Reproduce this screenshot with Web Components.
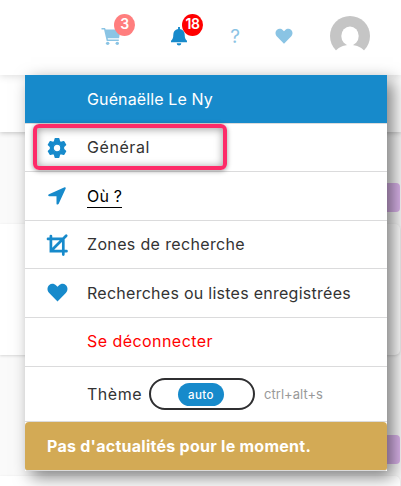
<!DOCTYPE html>
<html lang="fr">
<head>
<meta charset="utf-8">
<title>Menu utilisateur</title>
<style>
  html, body {
    margin: 0;
    height: 486px;
    overflow: hidden;
    background: #fafafa;
    font-family: Inter, "Noto Sans", sans-serif;
    color: #333;
  }
</style>
</head>
<body>
<user-page>
  <top-bar slot="top"></top-bar>
  <user-menu slot="menu">
    <menu-row kind="head" height="49"><fit-text width="126">Guénaëlle Le Ny</fit-text></menu-row>
    <menu-row icon="gear" height="48" marked><fit-text width="63">Général</fit-text></menu-row>
    <menu-row icon="arrow" kind="link" height="49"><fit-text width="35">Où ?</fit-text></menu-row>
    <menu-row icon="crop" height="48"><fit-text width="158">Zones de recherche</fit-text></menu-row>
    <menu-row icon="heart" height="49"><fit-text width="264">Recherches ou listes enregistrées</fit-text></menu-row>
    <menu-row kind="danger" height="49"><fit-text width="126">Se déconnecter</fit-text></menu-row>
    <menu-row kind="theme" height="55"><theme-switch></theme-switch></menu-row>
    <menu-row kind="news" height="49"><fit-text width="264">Pas d'actualités pour le moment.</fit-text></menu-row>
  </user-menu>
</user-page>

<script>
const ICONS = {
  gear: '<path stroke="currentColor" stroke-width="1.400" stroke-linejoin="round" fill-rule="evenodd" d="M8.200.8h3.600l.6 2.700 1.700 1 2.600-.9 1.900 3.200-2.100 1.900v2.600l2.100 1.900-1.900 3.200-2.600-.9-1.700 1-.6 2.700H8.200l-.6-2.700-1.700-1-2.600.9-1.900-3.200 2.100-1.900V8.700L1.400 6.800l1.900-3.200 2.600.9 1.700-1zM10 6.100a3.900 3.900 0 1 0 0 7.800 3.900 3.900 0 0 0 0-7.800z"/>',
  arrow: '<path d="M17.600 1.300 2 8.200c-1.300.6-.9 2.100.3 2.100h7.200v7.100c0 1.300 1.600 1.700 2.200.4L18.700 2.600c.3-.8-.4-1.500-1.100-1.300z"/>',
  crop: '<path fill="none" stroke="currentColor" stroke-width="2.700" stroke-linecap="round" d="M1 3.900h15.300v15.700M3.900 1v15.200H19.500M4.700 15.300 19.200 .8"/>',
  heart: '<path d="M10 18.500 1.700 10C-.6 7.600-.5 4 1.800 2c2-1.800 5-1.400 6.900.5L10 3.800l1.300-1.300c1.900-1.900 4.900-2.300 6.900-.5 2.300 2 2.400 5.600.1 8z"/>',
  cart: '<path fill-rule="evenodd" d="M0 1h3.700l.7 1.700H20l-1.500 9.200H6.500l.3 1.200h11.400v1.700H5.500L2.700 2.500H0z"/><circle cx="6.500" cy="17.200" r="1.800"/><circle cx="16.600" cy="17.200" r="1.800"/>',
  bell: '<path d="M9 0h2v2c3.300.6 5 3 5 6.200 0 3.600.9 4.900 2.400 6.300V16H1.600v-1.500C3.100 13.100 4 11.800 4 8.200 4 5 5.700 2.600 9 2zM7.600 17.200h4.800a2.400 2.400 0 0 1-4.800 0z"/>',
}

class FitText extends HTMLElement {
  connectedCallback() {
    this.attachShadow({ mode: 'open' }).innerHTML = `
      <style>
        :host { display: inline-block; white-space: nowrap; }
      </style>
      <slot></slot>
    `
    this.#fit()
  }

  // spread the letters so the label takes the requested width
  #fit() {
    const width = Number(this.getAttribute('width'))
    const count = this.textContent.length
    if (!width || !count) return
    const natural = this.getBoundingClientRect().width
    this.style.letterSpacing = `${(width - natural) / count}px`
  }
}

class UiIcon extends HTMLElement {
  connectedCallback() {
    this.attachShadow({ mode: 'open' }).innerHTML = `
      <style>
        :host { display: block; width: 20px; height: 20px; color: #178acb; }
        svg { display: block; width: 100%; height: 100%; fill: currentColor; overflow: visible; }
      </style>
      <svg viewBox="0 0 20 20">${ICONS[this.getAttribute('name')] || ''}</svg>
    `
  }
}

class BarBadge extends HTMLElement {
  connectedCallback() {
    this.attachShadow({ mode: 'open' }).innerHTML = `
      <style>
        :host {
          position: absolute;
          left: 13px;
          top: -13px;
          width: 21px;
          height: 22px;
          border-radius: 50%;
          background: #f00;
          color: #fff;
          font-size: 14px;
          font-weight: 600;
          line-height: 20px;
          letter-spacing: -.4px;
          text-align: center;
        }
      </style>
      <slot></slot>
    `
  }
}

class TopBar extends HTMLElement {
  connectedCallback() {
    this.attachShadow({ mode: 'open' }).innerHTML = `
      <style>
        :host {
          display: flex;
          box-sizing: border-box;
          height: 75px;
          padding: 16px 31px 0 101px;
          background: #fff;
          box-shadow: 0 1px 8px rgba(0, 0, 0, .14);
        }
        .item { position: relative; width: 20px; margin-top: 11px; }
        .item ui-icon { height: 19px; }
        .cart { margin-right: 48px; }
        .cart, .help, .fav { opacity: .5; }
        .bell { margin-right: 40px; }
        .bell bar-badge { left: 13px; }
        .help {
          width: 12px;
          margin: 10px 34px 0 0;
          color: #178acb;
          font-size: 19px;
          line-height: 21px;
          text-align: center;
        }
        .fav { margin: 12px 35px 0 0; }
        .fav ui-icon { width: 18px; height: 17px; }
        .avatar { display: block; width: 40px; height: 40px; }
      </style>
      <div class="item cart"><ui-icon name="cart"></ui-icon><bar-badge>3</bar-badge></div>
      <div class="item bell"><ui-icon name="bell"></ui-icon><bar-badge>18</bar-badge></div>
      <div class="help">?</div>
      <div class="item fav"><ui-icon name="heart"></ui-icon></div>
      <svg class="avatar" viewBox="0 0 40 40">
        <circle cx="20" cy="20" r="20" fill="#c5c5c5"/>
        <ellipse cx="20" cy="20" rx="8.700" ry="9.500" fill="#fff"/>
        <path d="M4 37c3.500-5.500 9-8 16-8s12.500 2.500 16 8v4H4z" fill="#fff"/>
      </svg>
    `
  }
}

class MenuRow extends HTMLElement {
  connectedCallback() {
    const icon = this.getAttribute('icon')
    this.attachShadow({ mode: 'open' }).innerHTML = `
      <style>
        :host {
          display: flex;
          align-items: center;
          position: relative;
          box-sizing: border-box;
          height: ${this.getAttribute('height')}px;
          padding-left: 22px;
          border-bottom: 1px solid #dbdbdc;
          background: #fff;
          font-size: 16px;
          line-height: 24px;
        }
        .icon { width: 21px; margin-right: 19px; }
        ui-icon[name="heart"] { width: 21px; }
        :host([kind="head"]) { background: #178acb; color: #fff; }
        :host([kind="danger"]) { color: #f00; }
        :host([icon="gear"]) .label,
        :host([icon="crop"]) .label,
        :host([kind="danger"]) .label { padding-bottom: 2px; }
        :host([kind="link"]) { color: #000; }
        :host([kind="link"]) .label { height: 22px; border-bottom: 1px solid #000; line-height: 22px; }
        :host([kind="news"]) {
          background: #d3aa55;
          border-radius: 4px 4px 3px 3px;
          color: #fff;
          font-weight: 700;
        }
        :host([kind="news"]) .icon { display: none; }
        .mark {
          position: absolute;
          z-index: 1;
          left: 8px;
          top: 0;
          box-sizing: border-box;
          width: 194px;
          height: 46px;
          border: 4px solid #fd2b68;
          border-radius: 6px;
          box-shadow: 0 1px 5px rgba(0, 0, 0, .4), inset 0 1px 8px rgba(0, 0, 0, .4);
        }
      </style>
      <div class="icon">${icon ? `<ui-icon name="${icon}"></ui-icon>` : ''}</div>
      <div class="label"><slot></slot></div>
      ${this.hasAttribute('marked') ? '<div class="mark"></div>' : ''}
    `
  }
}

class ThemeSwitch extends HTMLElement {
  connectedCallback() {
    this.attachShadow({ mode: 'open' }).innerHTML = `
      <style>
        :host { display: flex; align-items: center; }
        .track {
          display: flex;
          align-items: center;
          justify-content: center;
          box-sizing: border-box;
          width: 106px;
          height: 32px;
          margin: 0 9px 0 7px;
          border: 2px solid #2f2f31;
          border-radius: 16px;
        }
        .thumb {
          width: 46px;
          height: 23px;
          margin-left: -2px;
          border-radius: 12px;
          background: #178acb;
          color: #fff;
          font-size: 11.500px;
          font-weight: 500;
          line-height: 24px;
          text-align: center;
        }
        .keys { color: #999; font-size: 13px; }
      </style>
      <fit-text width="55">Thème</fit-text>
      <div class="track"><div class="thumb"><fit-text width="26">auto</fit-text></div></div>
      <fit-text class="keys" width="59">ctrl+alt+s</fit-text>
    `
  }
}

class UserMenu extends HTMLElement {
  connectedCallback() {
    this.attachShadow({ mode: 'open' }).innerHTML = `
      <style>
        :host {
          display: flex;
          flex-direction: column;
          width: 362px;
          background: #fff;
          box-shadow: 6px 6px 16px rgba(0, 0, 0, .5);
        }
      </style>
      <slot></slot>
    `
  }
}

class UserPage extends HTMLElement {
  connectedCallback() {
    this.attachShadow({ mode: 'open' }).innerHTML = `
      <style>
        :host { display: block; position: relative; height: 486px; overflow: hidden; background: #fafafa; }
        .strip { height: 57px; background: #fff; box-shadow: 0 1px 5px rgba(0, 0, 0, .22); }
        .tools { display: flex; justify-content: flex-end; align-items: flex-end; padding-right: 1px; }
        .first { height: 80px; margin-bottom: 12px; }
        .second { height: 109px; margin-bottom: 12px; }
        .btn { width: 60px; height: 29px; border-radius: 4px; background: #dbb4eb; }
        .card { height: 131px; margin-right: 1px; border-radius: 0 5px 5px 0; background: #fff; box-shadow: 0 1px 3px rgba(0, 0, 0, .14); }
        slot[name="top"]::slotted(*) { position: relative; z-index: 1; }
        slot[name="menu"]::slotted(*) { position: absolute; z-index: 2; left: 25px; top: 75px; }
      </style>
      <slot name="top"></slot>
      <div class="strip"></div>
      <div class="tools first"><div class="btn"></div></div>
      <div class="card"></div>
      <div class="tools second"><div class="btn"></div></div>
      <div class="card"></div>
      <slot name="menu"></slot>
    `
  }
}

customElements.define('ui-icon', UiIcon)
customElements.define('bar-badge', BarBadge)
customElements.define('top-bar', TopBar)
customElements.define('menu-row', MenuRow)
customElements.define('theme-switch', ThemeSwitch)
customElements.define('user-menu', UserMenu)
customElements.define('user-page', UserPage)
// last, because it measures itself with the styles of the elements around it
customElements.define('fit-text', FitText)
</script>
</body>
</html>
